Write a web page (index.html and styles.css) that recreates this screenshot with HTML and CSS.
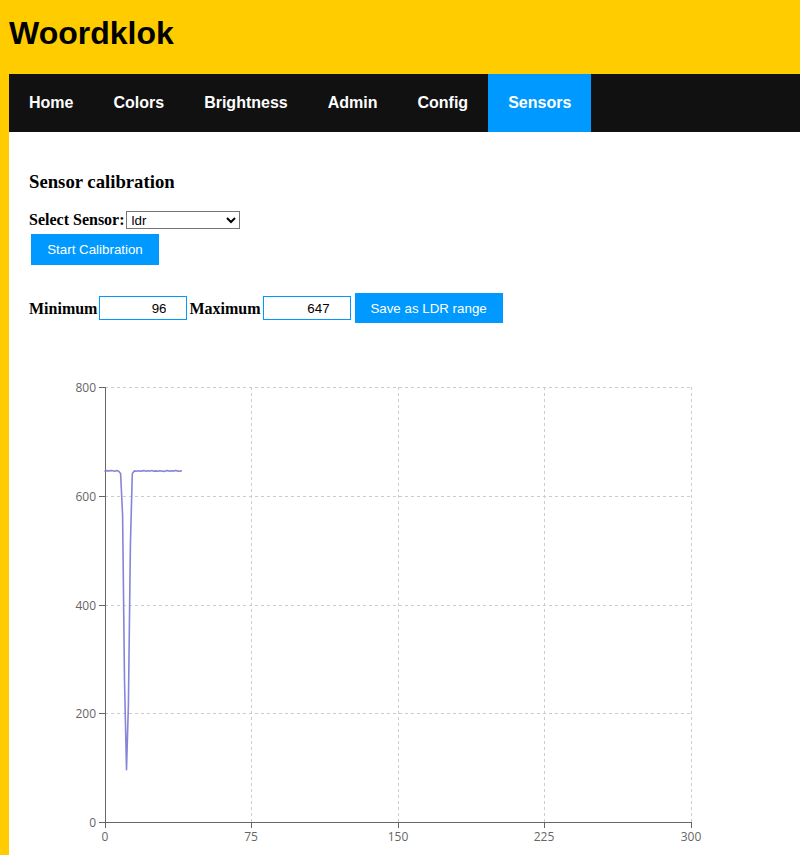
FILE: index.html
```html
<!DOCTYPE html>
<html>
<head>
<meta charset="utf-8">
<title>Woordklok</title>
<link rel="stylesheet" href="styles.css">
</head>
<body>
<h1 class="title">Woordklok</h1>
<nav class="nav">
  <a href="#">Home</a>
  <a href="#">Colors</a>
  <a href="#">Brightness</a>
  <a href="#">Admin</a>
  <a href="#">Config</a>
  <a href="#" class="active">Sensors</a>
</nav>
<main class="content">
  <h3 class="heading">Sensor calibration</h3>
  <div class="select-row">
    <label class="lbl">Select Sensor:</label>
    <select class="sensor-select"><option>ldr</option></select>
  </div>
  <button class="btn btn-start">Start Calibration</button>
  <div class="range-row">
    <label class="lbl">Minimum</label>
    <input class="num" type="text" value="96">
    <label class="lbl">Maximum</label>
    <input class="num" type="text" value="647">
    <button class="btn btn-save">Save as LDR range</button>
  </div>
  <svg class="chart" width="720" height="485" viewBox="0 0 720 485">
    <g transform="translate(-29,-370)">
      <g class="grid">
        <line x1="105" y1="387.5" x2="691" y2="387.5"/>
        <line x1="105" y1="496.5" x2="691" y2="496.5"/>
        <line x1="105" y1="605.5" x2="691" y2="605.5"/>
        <line x1="105" y1="713.5" x2="691" y2="713.5"/>
        <line x1="251.5" y1="387" x2="251.5" y2="822"/>
        <line x1="398.5" y1="387" x2="398.5" y2="822"/>
        <line x1="544.5" y1="387" x2="544.5" y2="822"/>
        <line x1="691.5" y1="387" x2="691.5" y2="822"/>
      </g>
      <g class="axis">
        <line x1="105.5" y1="387" x2="105.5" y2="822"/>
        <line x1="105" y1="822.5" x2="692" y2="822.5"/>
        <line x1="99" y1="387.5" x2="105" y2="387.5"/>
        <line x1="99" y1="496.5" x2="105" y2="496.5"/>
        <line x1="99" y1="605.5" x2="105" y2="605.5"/>
        <line x1="99" y1="713.5" x2="105" y2="713.5"/>
        <line x1="99" y1="822.5" x2="105" y2="822.5"/>
        <line x1="105.5" y1="822" x2="105.5" y2="828"/>
        <line x1="251.5" y1="822" x2="251.5" y2="828"/>
        <line x1="398.5" y1="822" x2="398.5" y2="828"/>
        <line x1="544.5" y1="822" x2="544.5" y2="828"/>
        <line x1="691.5" y1="822" x2="691.5" y2="828"/>
      </g>
      <g class="ticks-y">
        <text x="96" y="391.5">800</text>
        <text x="96" y="500.5">600</text>
        <text x="96" y="609.5">400</text>
        <text x="96" y="717.5">200</text>
        <text x="96" y="826.5">0</text>
      </g>
      <g class="ticks-x">
        <text x="105" y="841">0</text>
        <text x="251" y="841">75</text>
        <text x="398" y="841">150</text>
        <text x="544" y="841">225</text>
        <text x="691" y="841">300</text>
      </g>
      <polyline class="series" points="105,471 107,470.6 108.9,471 110.9,470.6 112.8,470.8 114.8,471.2 116.7,470.6 118.7,471.3 120.6,473.5 122.6,515 124.5,680 126.5,769.8 128.4,705 130.4,545 132.3,473.5 134.3,470.9 136.3,471.2 138.2,470.8 140.2,471.3 142.1,470.9 144.1,470.6 146,471.2 148,470.8 149.9,471 151.9,470.5 153.8,471.2 155.8,470.9 157.7,471.3 159.7,470.8 161.6,471 163.6,471.4 165.5,470.9 167.5,470.6 169.4,471.2 171.4,470.8 173.4,471.1 175.3,470.5 177.3,470.9 179.2,471.2 181.2,470.9"/>
    </g>
  </svg>
</main>
</body>
</html>
```
FILE: styles.css
```css
html, body {
  margin: 0;
}
body {
  padding-left: 9px;
  background: #ffcc00;
  font-family: "Liberation Serif", "Times New Roman", serif;
  color: #000;
}
.title {
  font-family: "Liberation Sans", Arial, sans-serif;
  font-weight: bold;
  font-size: 32px;
  line-height: 37px;
  margin: 15px 0 22px;
}
.nav {
  display: flex;
  height: 58px;
  background: #111111;
}
.nav a {
  display: block;
  padding: 0 20px;
  line-height: 58px;
  color: #ffffff;
  text-decoration: none;
  font-family: "Liberation Sans", Arial, sans-serif;
  font-weight: bold;
  font-size: 16px;
}
.nav a.active {
  background: #0099ff;
}
.content {
  background: #ffffff;
  padding: 20px 20px 0;
  min-height: 703px;
  overflow: hidden;
}
.heading {
  font-size: 18.72px;
  font-weight: bold;
  margin: 19px 0 17px;
  line-height: 22px;
}
.lbl {
  font-weight: bold;
  font-size: 16px;
  line-height: 18px;
}
.select-row {
  display: flex;
  align-items: center;
  height: 20px;
}
.sensor-select {
  width: 114px;
  height: 18px;
  margin-left: 1px;
  font-family: "Liberation Sans", Arial, sans-serif;
  font-size: 13.333px;
  border: 1px solid #767676;
  border-radius: 0;
  background: #fff;
  padding: 0 0 0 1px;
}
.btn {
  display: block;
  box-sizing: border-box;
  white-space: nowrap;
  border: none;
  background: #0099ff;
  color: #ffffff;
  font-family: "Liberation Sans", Arial, sans-serif;
  font-size: 13.333px;
  padding: 0 14px;
  cursor: pointer;
}
.btn-start {
  margin: 4px 0 0 2px;
  height: 31px;
  width: 128px;
}
.range-row {
  display: flex;
  align-items: center;
  margin-top: 28px;
  height: 30px;
}
.range-row .lbl {
  position: relative;
  top: 1px;
}
.num {
  box-sizing: border-box;
  width: 88px;
  height: 24px;
  margin: 0 2px 0 2px;
  border: 1px solid #0099ff;
  padding: 0 20px 0 2px;
  text-align: right;
  font-family: "Liberation Sans", Arial, sans-serif;
  font-size: 13.333px;
}
.btn-save {
  height: 30px;
  width: 148px;
  margin-left: 2px;
}
.chart {
  display: block;
  margin-top: 47px;
}
.grid line {
  stroke: #cccccc;
  stroke-width: 1;
  stroke-dasharray: 3 3;
}
.axis line {
  stroke: #666666;
  stroke-width: 1;
}
.ticks-y text, .ticks-x text {
  font-family: "Open Sans", "DejaVu Sans", sans-serif;
  font-size: 12px;
  fill: #666666;
}
.ticks-y text {
  text-anchor: end;
}
.ticks-x text {
  text-anchor: middle;
}
.series {
  fill: none;
  stroke: #8884d8;
  stroke-width: 1.6;
  stroke-linejoin: round;
  stroke-linecap: round;
}
```
